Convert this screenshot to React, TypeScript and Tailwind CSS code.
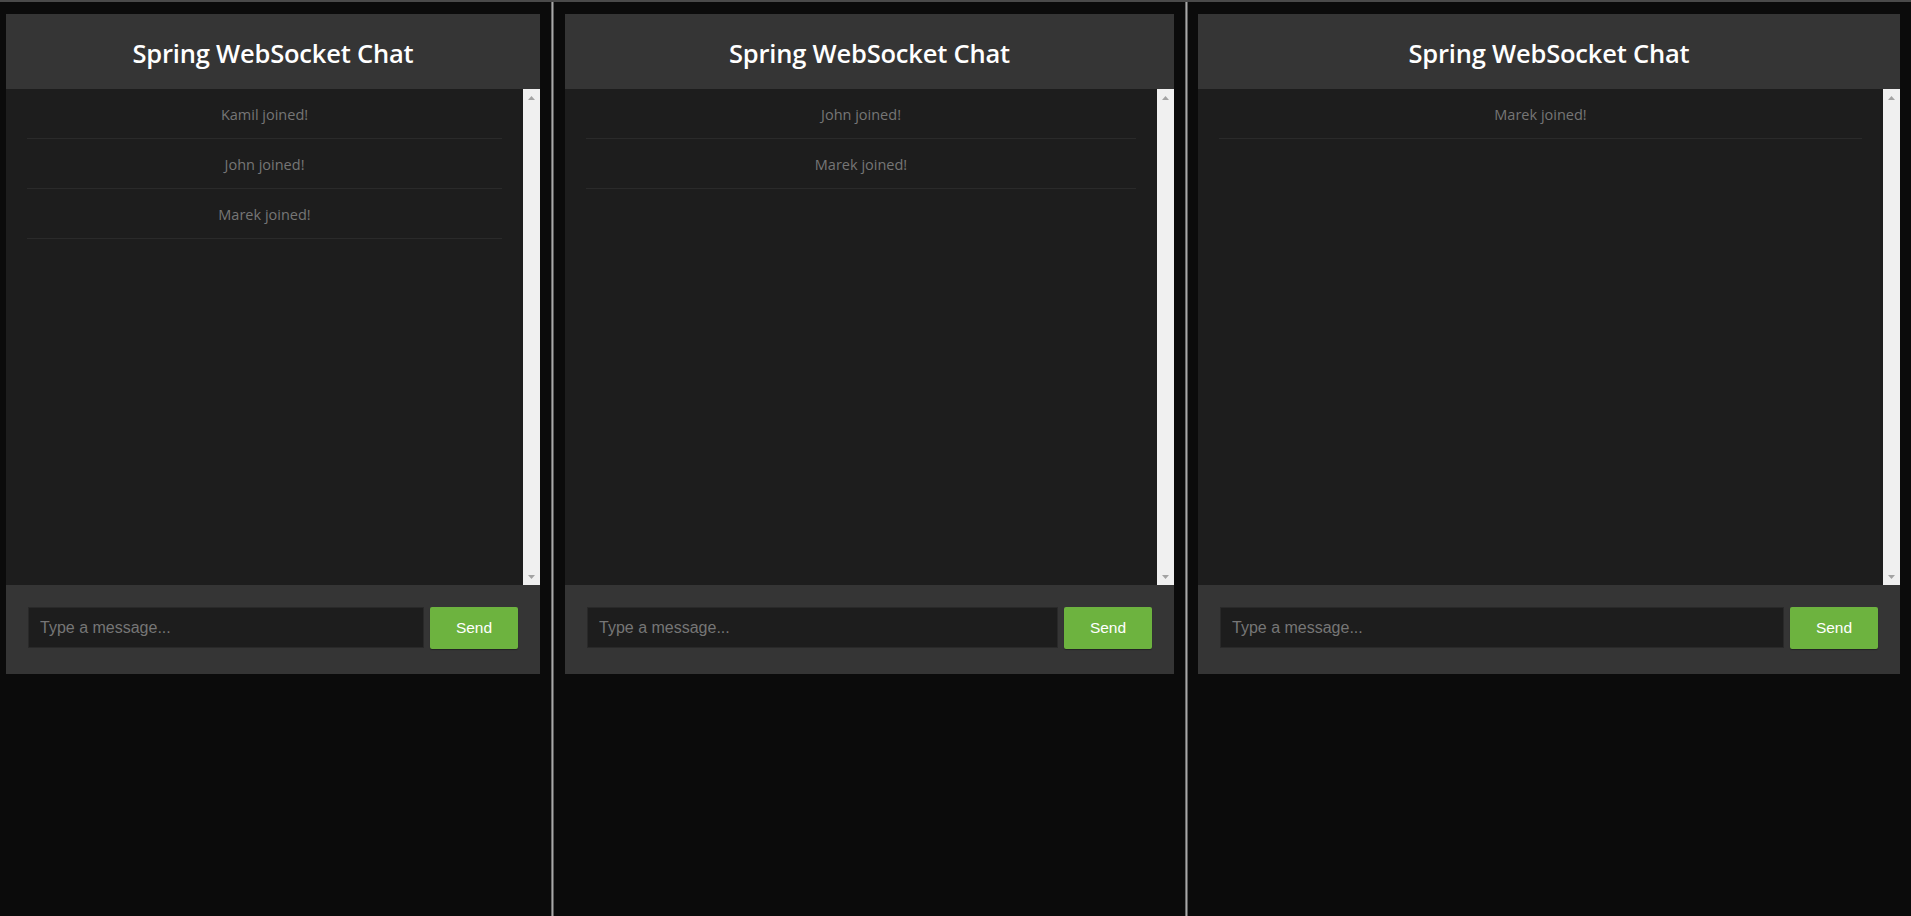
import { ReactNode } from "react";

type ChatProps = { messages: string[] };

function ScrollArrow({ down }: { down?: boolean }) {
  return (
    <div className="flex h-[17px] w-[17px] items-center justify-center">
      <svg width="7" height="4" viewBox="0 0 7 4">
        {down ? (
          <polygon points="0,0 7,0 3.5,4" fill="#a3a3a3" />
        ) : (
          <polygon points="0,4 7,4 3.5,0" fill="#a3a3a3" />
        )}
      </svg>
    </div>
  );
}

function ChatPanel({ messages }: ChatProps) {
  return (
    <div className="flex h-[660px] flex-col">
      <div className="flex h-[75px] items-center justify-center bg-[#353535] pt-[3px]">
        <h1 className="font-['Open_Sans',sans-serif] text-[25.5px] font-semibold tracking-[-0.2px] text-white">
          Spring WebSocket Chat
        </h1>
      </div>
      <div className="flex h-[496px]">
        <ul className="flex-1 bg-[#1d1d1d] px-[21px]">
          {messages.map((m) => (
            <li
              key={m}
              className="flex h-[50px] items-center justify-center border-b border-[#2a2a2a] pt-[2px] font-['Open_Sans',sans-serif] text-[14.5px] text-[#767676]"
            >
              {m}
            </li>
          ))}
        </ul>
        <div className="flex w-[17px] flex-col justify-between bg-[#f0f0f0]">
          <ScrollArrow />
          <ScrollArrow down />
        </div>
      </div>
      <div className="flex h-[89px] items-start gap-[6px] bg-[#353535] px-[22px] pt-[22px]">
        <input
          type="text"
          placeholder="Type a message..."
          className="h-[41px] flex-1 border border-[#292929] bg-[#1d1d1d] px-[11px] font-['Liberation_Sans',Arial,sans-serif] text-[16px] text-[#ccc] outline-none placeholder:text-[#767676]"
        />
        <button className="h-[42px] w-[88px] rounded-[2px] bg-[#6db33f] font-['Liberation_Sans',Arial,sans-serif] text-[15.5px] text-white shadow-[0_1px_1px_rgba(0,0,0,0.35)]">
          Send
        </button>
      </div>
    </div>
  );
}

function Window({ className, children }: { className: string; children: ReactNode }) {
  return <div className={`shrink-0 pt-[12px] ${className}`}>{children}</div>;
}

function Divider() {
  return (
    <div className="flex w-[3px] shrink-0">
      <div className="w-px bg-[#6a6a6a]" />
      <div className="w-px bg-[#a8a8a8]" />
      <div className="w-px bg-[#5a5a5a]" />
    </div>
  );
}

export default function App() {
  return (
    <div className="flex h-[916px] w-[1911px] overflow-hidden border-t-2 border-[#4a4a4a] bg-[#0b0b0b]">
      <Window className="w-[551px] pl-[6px] pr-[11px]">
        <ChatPanel messages={["Kamil joined!", "John joined!", "Marek joined!"]} />
      </Window>
      <Divider />
      <Window className="w-[631px] px-[11px]">
        <ChatPanel messages={["John joined!", "Marek joined!"]} />
      </Window>
      <Divider />
      <Window className="w-[723px] pl-[10px] pr-[11px]">
        <ChatPanel messages={["Marek joined!"]} />
      </Window>
    </div>
  );
}
